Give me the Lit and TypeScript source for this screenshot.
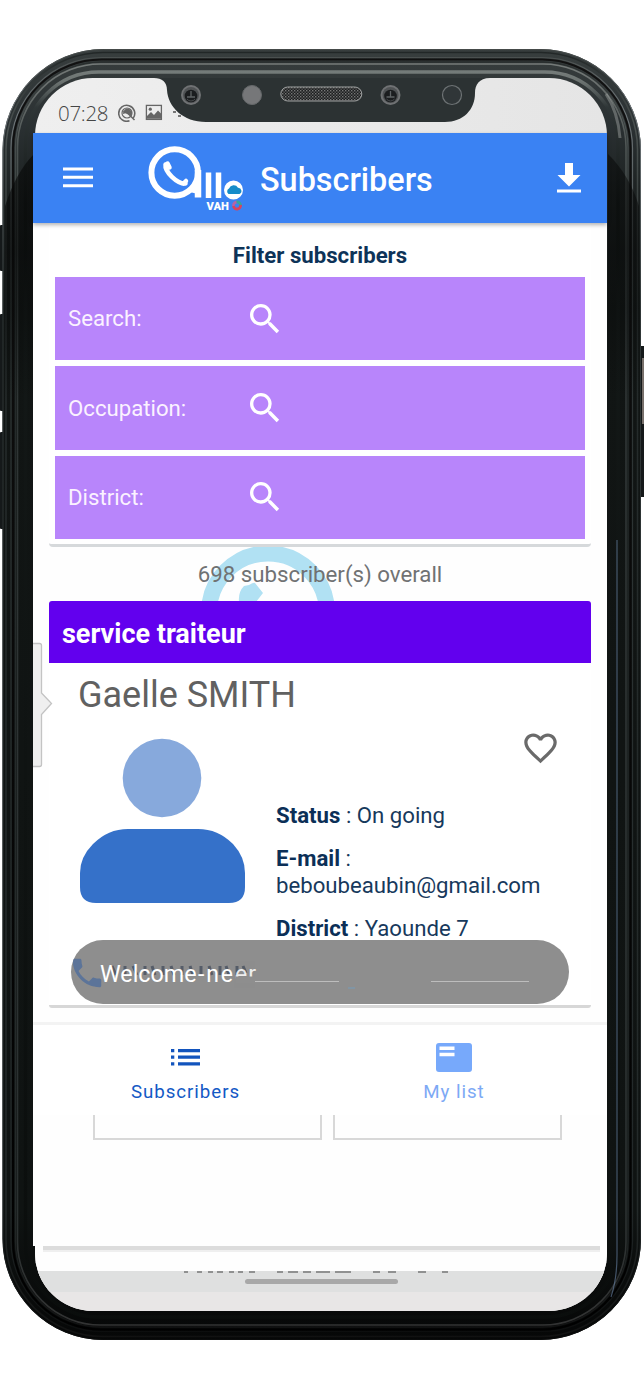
import { LitElement, html, css, svg } from "lit";
import { customElement, property } from "lit/decorators.js";

/* Bezel rings, from the outer edge to the glass: inset, stroke width, paint */
const RINGS: [number, number, string][] = [
  [0.5, 1, "url(#edge)"],
  [3.5, 1.5, "url(#soft)"],
  [8.5, 1.2, "url(#edge)"],
  [10.5, 2, "url(#deep)"],
  [13, 1.3, "url(#soft)"],
  [15, 1.6, "url(#mid)"],
  [23, 3.5, "url(#lip)"],
];

@customElement("phone-frame")
class PhoneFrame extends LitElement {
  static styles = css`
    :host { display: block; width: 644px; height: 1378px; }
    svg { display: block; }
  `;
  render() {
    return html`<svg width="644" height="1378" viewBox="0 0 644 1378">
      <defs>
        <linearGradient id="body" gradientUnits="userSpaceOnUse" x1="0" y1="49" x2="0" y2="1340">
          <stop offset="0" stop-color="#383e3e" /><stop offset=".06" stop-color="#2a3032" />
          <stop offset=".11" stop-color="#1d2222" /><stop offset=".2" stop-color="#111514" />
          <stop offset=".9" stop-color="#0f1312" /><stop offset="1" stop-color="#060707" />
        </linearGradient>
        <linearGradient id="edge" gradientUnits="userSpaceOnUse" x1="0" y1="49" x2="0" y2="1340">
          <stop offset="0" stop-color="#454a49" /><stop offset=".05" stop-color="#70777a" />
          <stop offset=".2" stop-color="#303737" /><stop offset=".9" stop-color="#222829" /><stop offset="1" stop-color="#0b0c0c" />
        </linearGradient>
        <linearGradient id="soft" gradientUnits="userSpaceOnUse" x1="0" y1="49" x2="0" y2="1340">
          <stop offset="0" stop-color="#202525" /><stop offset=".06" stop-color="#4b5251" />
          <stop offset=".2" stop-color="#252b2b" /><stop offset=".9" stop-color="#242a2a" /><stop offset="1" stop-color="#111" />
        </linearGradient>
        <linearGradient id="deep" gradientUnits="userSpaceOnUse" x1="0" y1="49" x2="0" y2="1340">
          <stop offset="0" stop-color="#111" /><stop offset="1" stop-color="#000" />
        </linearGradient>
        <linearGradient id="mid" gradientUnits="userSpaceOnUse" x1="0" y1="49" x2="0" y2="1340">
          <stop offset="0" stop-color="#7b807e" /><stop offset=".08" stop-color="#4b5251" />
          <stop offset=".2" stop-color="#303636" /><stop offset=".9" stop-color="#2b3131" /><stop offset="1" stop-color="#333" />
        </linearGradient>
        <linearGradient id="lip" gradientUnits="userSpaceOnUse" x1="0" y1="49" x2="0" y2="1340">
          <stop offset="0" stop-color="#858b89" /><stop offset=".025" stop-color="#6d7472" /><stop offset=".045" stop-color="#2f3637" />
          <stop offset=".12" stop-color="#141918" /><stop offset="1" stop-color="#0a0d0c" />
        </linearGradient>
        <linearGradient id="glass" x1="0" y1="0" x2="1" y2="0">
          <stop offset="0" stop-color="#efefef" /><stop offset="1" stop-color="#e5e5e5" />
        </linearGradient>
        <linearGradient id="shade" x1="0" y1="0" x2="0" y2="1">
          <stop offset="0" stop-color="#050606" /><stop offset=".4" stop-color="#050606" /><stop offset="1" stop-color="#050606" stop-opacity="0" />
        </linearGradient>
      </defs>
      <g fill="#15191a">
        <rect x="0" y="225" width="5" height="46" rx="1" /><rect x="0" y="314" width="5" height="97" rx="1" />
        <rect x="0" y="432" width="5" height="97" rx="1" /><rect x="639" y="346" width="6" height="151" rx="1" />
      </g>
      <rect x="642" y="358" width="2" height="66" fill="#77706b" />
      <rect x="2.5" y="49" width="638.5" height="1291" rx="101" fill="url(#body)" />
      ${RINGS.map(([i, w, c]) => svg`<rect x=${2.5 + i} y=${49 + i} width=${638.5 - 2 * i} height=${1291 - 2 * i} rx=${101 - i * 1.2} fill="none" stroke=${c} stroke-width=${w} />`)}
      <path d="M5 206C12 184 22 166 34 154V400H5z" fill="url(#shade)" opacity=".6" />
      <path d="M608 154C622 168 632 184 639 206V400H608z" fill="url(#shade)" opacity=".5" />
      <path d="M606 94q12 18 14 44" fill="none" stroke="#a3a8a7" stroke-width="3" opacity=".45" />
      <path d="M617 540V1255q0 24-6 42" fill="none" stroke="#6a85a8" stroke-width="1.200" opacity=".6" />
      <rect x="35" y="78" width="572" height="1233" rx="58" fill="url(#glass)" />
    </svg>`;
  }
}

@customElement("phone-notch")
class PhoneNotch extends LitElement {
  static styles = css`
    :host { display: block; }
    svg { display: block; }
  `;
  lens(x: number) {
    return svg`<circle cx=${x} cy="17" r="10" fill="#707274" /><circle cx=${x} cy="17" r="8" fill="#505355" />
      <circle cx=${x} cy="18" r="6.300" fill="#1b1d1f" /><path d="M${x - 4} 19h8M${x} 13v6" stroke="#5f6365" stroke-width="1.300" />
      <path d="M${x - 4} 21a5 5 0 0 0 8 0" fill="none" stroke="#494d4f" />`;
  }
  render() {
    return html`<svg width="340" height="46" viewBox="150 0 340 46">
      <defs><pattern id="mesh" width="3" height="3" patternUnits="userSpaceOnUse">
        <rect width="3" height="3" fill="#1c1e1f" /><rect width="1.400" height="1.400" fill="#777" /><rect x="1.500" y="1.500" width="1.300" height="1.300" fill="#666" />
      </pattern></defs>
      <path d="M150 0H490C479 0 475 7 475 15C475 32 463 44 445 44H206C183 44 168 29 167 12C167 4 162 0 154 0z" fill="#2c3233" />
      ${this.lens(191)}${this.lens(390.5)}
      <circle cx="252" cy="17" r="9.500" fill="#767779" stroke="#65686a" />
      <circle cx="452" cy="17" r="9.500" fill="#303638" stroke="#6e7375" stroke-width="1.200" />
      <rect x="280.800" y="9" width="81" height="14" rx="7" fill="url(#mesh)" stroke="#a0a2a2" stroke-width="1" />
    </svg>`;
  }
}

@customElement("filter-row")
class FilterRow extends LitElement {
  @property() label = "";
  static styles = css`
    :host { display: grid; grid-template-columns: 177px 40px; align-items: center; box-sizing: border-box;
      height: 83.4px; padding-left: 13px; background: #b885fb; color: #fbf2ff; font-size: 22.2px; }
    svg { display: block; }
    span { padding-bottom: 1px; }
  `;
  render() {
    return html`<span>${this.label}:</span>
      <svg width="40" height="40" viewBox="0 0 24 24"><path fill="#fff" d="M15.5 14h-.79l-.28-.27A6.471 6.471 0 0 0 16 9.5 6.5 6.5 0 1 0 9.5 16c1.610 0 3.090-.59 4.230-1.570l.27.28v.79l5 4.990L20.490 19l-4.990-5zm-6 0C7.010 14 5 11.990 5 9.5S7.010 5 9.5 5 14 7.010 14 9.5 11.990 14 9.5 14z" /></svg>`;
  }
}

@customElement("app-root")
class AppRoot extends LitElement {
  static styles = css`
    :host { display: block; position: relative; width: 644px; height: 1378px; overflow: hidden; background: #fff;
      font-family: Roboto, "Noto Sans", sans-serif; }
    * { box-sizing: border-box; }
    svg { display: block; flex: none; }
    .frame { position: absolute; left: 0; top: 0; }
    .phone { position: relative; width: 574px; margin-left: 33px; padding-top: 78px; display: flex; flex-direction: column; white-space: nowrap; }
    .status { position: relative; height: 55px; display: flex; align-items: center; gap: 9px; padding: 14px 0 0 25px; color: #5a5a5a; }
    .time { font: 300 20.5px/24px "Open Sans", sans-serif; letter-spacing: -.3px; width: 51px; color: #454545; }
    .notch { position: absolute; left: 117px; top: 0; }
    .bar { position: relative; height: 89.500px; display: flex; align-items: center; background: #3a82f3; color: #fff;
      box-shadow: 0 2px 4px #0000004d; padding-left: 30px; }
    .logo { margin-left: 55px; }
    .title { flex: 1; margin-left: 15px; padding-top: 5px; font-size: 32.4px; font-weight: 500; line-height: 40px; }
    .download { margin-right: 26px; }
    .screen { height: 1023.500px; background: #fefefe; display: flex; flex-direction: column; }
    .filters { margin: 0 16px; height: 324px; padding: 18px 6px 0; background: #fff; border-bottom: 3px solid #d6d9db; border-radius: 0 0 4px 4px;
      display: flex; flex-direction: column; gap: 6px; }
    .heading { height: 30.500px; text-align: center; color: #0d3358; font-weight: 700; font-size: 22.200px; line-height: 28px; }
    .count { position: relative; z-index: 0; height: 54.500px; padding-top: 12px; text-align: center; color: #707273; font-size: 22.250px; line-height: 30px; overflow: hidden; }
    .watermark { position: absolute; left: 165px; top: -2px; z-index: -1; }
    .card { position: relative; margin: 0 16px; height: 407px; border-bottom: 3px solid #d7d7d7; border-radius: 3px; background: #fff; }
    .job { height: 61.500px; padding: 3px 0 0 13px; background: #6200ee; border-radius: 3px 3px 0 0; color: #fff; font-weight: 700; font-size: 27px; line-height: 61px; }
    .name { padding: 10.500px 0 0 29px; color: #616161; font-size: 36px; line-height: 44px; }
    .person { display: grid; grid-template-columns: 196px 1fr; padding: 11px 31px 0 31px; height: 210px; }
    .avatar { margin-top: 10px; }
    .info { display: flex; flex-direction: column; color: #17395c; font-size: 22.200px; line-height: 27px; }
    .heart { align-self: flex-end; margin-bottom: 34px; }
    .line { margin-bottom: 16px; }
    .line b { color: #0b2f57; }
    .toast { position: absolute; left: 22px; top: 339px; width: 498px; height: 64px; border-radius: 32px; background: #8e8e8e;
      display: flex; align-items: center; overflow: hidden; color: #fff; font-size: 23px; }
    .call { margin: 2px -6px 0 -3px; }
    .toast span { position: relative; padding-top: 4px; }
    .toast .welcome { width: 98px; font-size: 23.3px; }
    .toast .rest-of { letter-spacing: 1.900px; }
    .toast .faint { letter-spacing: 1px; opacity: .85; }
    .smudge { position: absolute; left: 0; top: 0; }
    .tab { position: absolute; left: 33px; top: 642px; }
    .nav { margin-top: 14px; height: 93px; border-top: 3px solid #f3f3f3; background: #fff; display: grid; grid-template-columns: 305px 232px;
      font-size: 18.700px; letter-spacing: .95px; line-height: 24px; }
    .item { display: flex; flex-direction: column; align-items: center; color: #1459c5; }
    .item.mine { color: #7da9f5; }
    .glyph { height: 54.500px; display: flex; align-items: center; padding-top: 10px; }
    .boxes { display: grid; grid-template-columns: 229px 229px; gap: 11px; padding-left: 60px; }
    .box { height: 25px; border: 2px solid #d8d8d8; border-top: 0; }
    .bottom { width: 572px; height: 65px; margin-left: 2px; border-radius: 0 0 58px 58px; overflow: hidden; background: #e8e6e6; }
    .rest { height: 25px; background: #fefefe; padding: 0 7px 0 8px; }
    .rule { height: 6px; background: #dcdcdc; border-bottom: 2px solid #efefef; }
    .system { height: 21px; background: #dfe0e0; }
  `;
  render() {
    return html`
      <phone-frame class="frame"></phone-frame>
      <div class="phone">
        <div class="status">
          <span class="time">07:28</span>
          <svg width="18" height="18" viewBox="0 0 18 18" fill="none" stroke="#666"><path d="M15.200 14A8 8 0 1 0 11.500 16.800" stroke-width="1.600" /><circle cx="9" cy="9" r="5" stroke-width="1.200" /><path d="M4.500 8l3.500-3.500h3l3 3.500-.3 4z" fill="#666" stroke="none" /><path d="M5 9.200l3.500-1.200 5 5 3 3" stroke="#666" stroke-width="1.500" /></svg>
          <svg width="18" height="17" viewBox="0 0 18 17"><rect x="1.400" y="1.400" width="15" height="14" fill="none" stroke="#666" stroke-width="1.300" /><circle cx="5.300" cy="5.200" r="1.600" fill="#666" /><path d="M2 14.800V12l4-4 3 3 4-4.500 3.500 3.500v4.800z" fill="#666" /></svg>
          <svg width="12" height="12" viewBox="0 0 12 12" fill="#777"><rect x="1" y="4" width="3" height="2" /><rect x="6" y="8" width="3" height="2" /></svg>
          <phone-notch class="notch"></phone-notch>
        </div>
        <div class="bar">
          <svg width="30" height="21" viewBox="0 0 30 21" stroke="#fff" stroke-width="3.100"><path d="M0 2H30M0 10.300H30M0 18.800H30" /></svg>
          <svg class="logo" width="97" height="70" viewBox="148 143 97 70" fill="none" stroke="#fff">
            <circle cx="174.700" cy="172.500" r="23.300" stroke-width="6" />
            <path d="M198 170V197.500" stroke-width="6.500" />
            <path d="M188 191l6-4 3 6z" fill="#fff" stroke-width="1.500" />
            <path d="M208.500 172.500V198M218.500 172.500V198" stroke-width="5.500" />
            <circle cx="233.500" cy="190" r="8" fill="#fff" stroke-width="3" />
            <path d="M228.500 194a3.200 3.200 0 0 1 .5-5.500a5 5 0 0 1 9-.8a3.300 3.300 0 0 1 1.500 6.300z" fill="#168cc9" stroke="none" />
            <path d="M165.500 164.500c-1 7 11.500 19.500 20 19" stroke-width="4.500" stroke-linecap="round" />
            <path d="M167.500 163.500l2 4M183.500 183.500l2.500-2.500" stroke-width="4.500" stroke-linecap="round" />
            <text x="206.500" y="209.500" font-family="Roboto, sans-serif" font-weight="900" font-size="11.200" fill="#fff" stroke="none">VAH</text>
            <path d="M233.500 206A3.500 3.500 0 0 1 237 202" stroke="#b464a8" stroke-width="2.800" /><path d="M236.500 202A3.500 3.500 0 0 1 240.500 206" stroke="#36a59a" stroke-width="2.800" />
            <path d="M240.500 205A3.500 3.500 0 0 1 233.500 206" stroke="#d9435c" stroke-width="2.800" />
          </svg>
          <div class="title">Subscribers</div>
          <svg class="download" width="24" height="30" viewBox="0 0 24 30" fill="#fff"><path d="M8 0h8v12h7.500L12 23.500.5 12H8zM0 26.500h24v3H0z" /></svg>
        </div>
        <div class="screen">
          <div class="filters">
            <div class="heading">Filter subscribers</div>
            ${["Search", "Occupation", "District"].map((l) => html`<filter-row label=${l}></filter-row>`)}
          </div>
          <div class="count">
            <svg class="watermark" width="140" height="60" viewBox="198 544 140 60"><circle cx="268" cy="611.500" r="59" fill="none" stroke="#b1e1f3" stroke-width="16" /><path d="M244 585l5-1q5-3 6-2l8 10-7 9h-17q-1-10 5-16z" fill="#b1e1f3" /></svg>
            698 subscriber(s) overall
          </div>
          <div class="card">
            <div class="job">service traiteur</div>
            <div class="name">Gaelle SMITH</div>
            <div class="person">
              <svg class="avatar" width="165" height="167" viewBox="0 0 165 167"><circle cx="82" cy="40" r="39.300" fill="#87a9dc" /><path d="M48 91H118Q138 91 153 106Q165 119 165 135V149Q165 165 149 165H16Q0 165 0 149V135Q0 119 13 106Q28 91 48 91z" fill="#3571c9" /></svg>
              <div class="info">
                <svg class="heart" width="39" height="40" viewBox="0 0 24 24"><path fill="#6a6a6a" d="M16.500 3c-1.740 0-3.410.81-4.500 2.090C10.910 3.810 9.240 3 7.500 3 4.420 3 2 5.420 2 8.500c0 3.780 3.400 6.860 8.550 11.540L12 21.350l1.450-1.320C18.600 15.360 22 12.280 22 8.500 22 5.420 19.580 3 16.500 3zm-4.400 15.550l-.1.100-.1-.100C7.140 14.240 4 11.390 4 8.500 4 6.500 5.500 5 7.500 5c1.540 0 3.040.99 3.570 2.360h1.870C13.460 5.990 14.960 5 16.500 5c2 0 3.500 1.500 3.500 3.500 0 2.890-3.140 5.740-7.900 10.050z" /></svg>
                <div class="line"><b>Status</b> : On going</div>
                <div class="line"><b>E-mail</b> :<br />beboubeaubin@gmail.com</div>
                <div class="line"><b>District</b> : Yaounde 7</div>
              </div>
            </div>
            <div class="toast">
              <svg class="smudge" width="498" height="64" viewBox="0 0 498 64">
                <path d="M41 26l4 9m9-9v9m8-9l4 9m8-9v9m7-9l3 9m8-9v9m8-9l3 9m8-9v9m8-9l3 9m8-9v9m8-9l3 9m8-9v9m6-9l3 9m8-9v9m6-9l3 7" stroke="#555c68" stroke-width="3" fill="none" />
                <path d="M184 41.500h84M360 41.500h98" stroke="#bdbdbd" /><path d="M277 48h7" stroke="#7d97ab" stroke-width="1.500" />
              </svg>
              <svg class="call" width="38" height="38" viewBox="0 0 24 24"><path fill="#5c7499" d="M6.620 10.790c1.440 2.830 3.760 5.140 6.590 6.590l2.200-2.200c.27-.27.67-.36 1.020-.24 1.120.37 2.330.57 3.570.57.55 0 1 .45 1 1V20c0 .55-.45 1-1 1-9.390 0-17-7.610-17-17 0-.55.45-1 1-1h3.500c.55 0 1 .45 1 1 0 1.250.2 2.450.57 3.570.11.350.03.740-.25 1.020l-2.200 2.200z" /></svg>
              <span class="welcome">Welcome</span><span class="rest-of">-ne</span><span class="faint">er</span>
              <svg class="smudge" width="498" height="64" viewBox="0 0 498 64"><path d="M165 36.500h25v7h-25z" fill="#8e8e8e" /><path d="M184 41.500h84" stroke="#bdbdbd" /></svg>
            </div>
          </div>
          <div class="nav">
            <div class="item"><div class="glyph"><svg width="29" height="17" viewBox="0 0 29 17" fill="#1254bd"><path d="M0 0h3.300v3.200H0zM0 6.600h3.300v3.200H0zM0 13.200h3.300v3.200H0zM7 0h22v3.200H7zM7 6.600h22v3.200H7zM7 13.200h22v3.200H7z" /></svg></div><span>Subscribers</span></div>
            <div class="item mine"><div class="glyph"><svg width="36" height="29" viewBox="0 0 36 29"><rect width="36" height="29" rx="3" fill="#77a9fb" /><path d="M3.500 3.500h15v3.500h-15zM3.500 9.800h15v3.500h-15z" fill="#fff" /></svg></div><span>My list</span></div>
          </div>
          <div class="boxes"><div class="box"></div><div class="box"></div></div>
        </div>
        <div class="bottom">
          <div class="rest"><div class="rule"></div></div>
          <div class="system">
            <svg width="572" height="21" viewBox="35 1271 572 21"><path d="M184 1272h4m9 0h5m6 0h5m4 0h6m6 0h5m4 0h5m6 0h6m22 0h6m5 0h10m5 0h8m5 0h14m5 0h16m22 0h7m8 0h8m22 0h8m16 0h6" stroke="#777" stroke-width="1.500" /><rect x="245" y="1279" width="153" height="5" rx="2.500" fill="#a8a8a8" /></svg>
          </div>
        </div>
      </div>
      <svg class="tab" width="20" height="126" viewBox="33 642 20 126"><path d="M33 643.500h6.500q2 0 2 2V693l10 10.500-10 11V764.500q0 2-2 2H33" fill="#efefef" stroke="#c3c3c3" stroke-width="1.300" /></svg>
    `;
  }
}
